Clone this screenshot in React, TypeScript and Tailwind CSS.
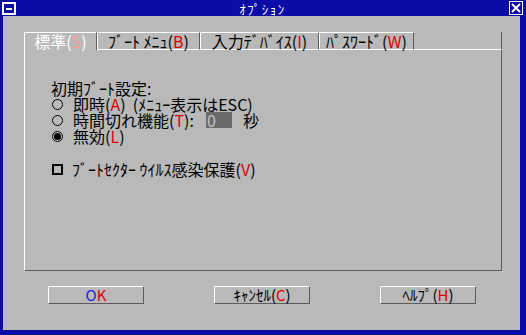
import React from 'react';

const font = "font-['Noto_Sans_CJK_JP','Noto_Sans',sans-serif]";

function Key({ k, pale }: { k: string; pale?: boolean }) {
  return (
    <>
      (<span className={pale ? 'text-[#ff9a9a]' : 'text-[#e00000]'}>{k}</span>)
    </>
  );
}

function Tab({ width, active, children }: { width: string; active?: boolean; children: React.ReactNode }) {
  return (
    <div
      className={`${width} h-[18px] flex items-start justify-center border-t border-l border-t-white border-l-white border-r border-r-[#5c5c5c] text-[16px] leading-[16px] ${
        active ? 'text-white' : 'border-b border-b-white text-black'
      }`}
    >
      <span>{children}</span>
    </div>
  );
}

function Radio({ checked }: { checked?: boolean }) {
  return (
    <span className="w-[11px] h-[11px] shrink-0 rounded-full border border-black flex items-center justify-center mt-[3px]">
      {checked && <span className="w-[7px] h-[7px] rounded-full bg-black" />}
    </span>
  );
}

function Button({ children }: { children: React.ReactNode }) {
  return (
    <div className="w-[96px] h-[18px] border border-t-white border-l-white border-r-[#5c5c5c] border-b-[#5c5c5c] flex items-center justify-center leading-[16px]">
      {children}
    </div>
  );
}

export default function App() {
  return (
    <div className={`w-[526px] h-[335px] flex flex-col bg-[#0b0ba6] text-[15px] ${font}`}>
      {/* title bar */}
      <div className="h-[16px] flex items-center justify-between px-[2px] text-white">
        <div className="w-[14px] h-[13px] border-2 border-white flex items-center justify-center mt-[1px]">
          <div className="w-[6px] h-[2px] bg-white" />
        </div>
        <div className="leading-[14px] text-[13px] tracking-[1.5px] pt-[1px]">ｵﾌﾟｼｮﾝ</div>
        <div className="w-[14px] h-[14px] border border-white flex items-center justify-center mr-[1px]">
          <svg width="10" height="10" viewBox="0 0 10 10">
            <path d="M1 1 L9 9 M9 1 L1 9" stroke="white" strokeWidth="2" />
          </svg>
        </div>
      </div>

      {/* body */}
      <div className="flex-1 flex flex-col bg-[#b9b9b9] ml-[3px] mr-[6px] mb-[5px] pl-[21px] pt-[16px]">
        <div className="w-[478px] flex">
          <Tab width="w-[73px]" active>
            標準<Key k="S" pale />
          </Tab>
          <Tab width="w-[103px]">
            ﾌﾞｰﾄ ﾒﾆｭ<Key k="B" />
          </Tab>
          <Tab width="w-[119px]">
            入力ﾃﾞﾊﾞｲｽ<Key k="I" />
          </Tab>
          <Tab width="w-[95px]">
            ﾊﾟｽﾜｰﾄﾞ<Key k="W" />
          </Tab>
          <div className="flex-1 border-b border-b-white border-r border-r-[#5c5c5c]" />
        </div>

        <div className="w-[478px] h-[221px] border-l border-l-white border-r border-r-[#5c5c5c] border-b border-b-[#5c5c5c] pl-[26px] pt-[30px] text-[16px] leading-[16px]">
          <div>初期ﾌﾞｰﾄ設定:</div>
          <div className="flex gap-[10px] pl-[1px]">
            <Radio />
            <span className="whitespace-pre">
              即時<Key k="A" />{'  '}(ﾒﾆｭｰ表示はESC)
            </span>
          </div>
          <div className="flex gap-[10px] pl-[1px]">
            <Radio />
            <span>
              時間切れ機能<Key k="T" />:
            </span>
            <span className="w-[26px] h-[16px] bg-[#6b6b6b] text-[#c4c4c4] pl-[1px] ml-[2px]">0</span>
            <span className="ml-[1px]">秒</span>
          </div>
          <div className="flex gap-[10px] pl-[1px]">
            <Radio checked />
            <span>
              無効<Key k="L" />
            </span>
          </div>
          <div className="flex gap-[9px] pl-[1px] mt-[17px]">
            <span className="w-[11px] h-[11px] shrink-0 border-2 border-black mt-[3px]" />
            <span>
              ﾌﾞｰﾄｾｸﾀｰ ｳｲﾙｽ感染保護<Key k="V" />
            </span>
          </div>
        </div>

        <div className="flex gap-[70px] ml-[24px] mt-[15px]">
          <Button>
            <span className="text-[#2020e0]">O</span>
            <span className="text-[#e00000]">K</span>
          </Button>
          <Button>
            ｷｬﾝｾﾙ<Key k="C" />
          </Button>
          <Button>
            ﾍﾙﾌﾟ<Key k="H" />
          </Button>
        </div>
      </div>
    </div>
  );
}
